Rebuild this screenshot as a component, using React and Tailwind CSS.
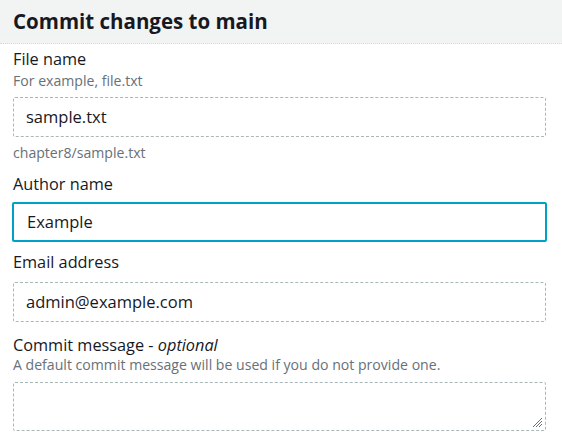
import React from 'react';

const font = { fontFamily: '"Open Sans", "Noto Sans", Arial, sans-serif' };

function Label({ children }) {
  return <div className="text-[16.3px] leading-[22px] text-[#16191f]">{children}</div>;
}

function Hint({ children }) {
  return <div className="text-[14.1px] leading-[18px] text-[#687078]">{children}</div>;
}

function Field({ value, focused }) {
  return (
    <div
      className={`h-[40px] flex items-center pl-[12px] bg-white rounded-[2px] text-[16.5px] text-[#16191f] ${
        focused ? 'border-2 border-[#00a1c9] -mx-px pl-[13px]' : 'border border-dashed border-[#aab7b8]'
      }`}
    >
      {value}
    </div>
  );
}

export default function App() {
  return (
    <div className="w-[562px] h-[441px] bg-white overflow-hidden" style={font}>
      <div className="h-[44px] bg-[#f2f3f3] border-b border-dotted border-[#d5dbdb] flex items-center px-[13px]">
        <h1 className="text-[20.5px] font-bold text-[#16191f]">Commit changes to main</h1>
      </div>
      <div className="pl-[13px] pr-[16px]">
        <div className="mt-[4px]">
          <Label>File name</Label>
          <div className="mt-[2px]"><Hint>For example, file.txt</Hint></div>
          <div className="mt-[7px]"><Field value="sample.txt" /></div>
          <div className="mt-[7px]"><Hint>chapter8/sample.txt</Hint></div>
        </div>
        <div className="mt-[11px]">
          <Label>Author name</Label>
          <div className="mt-[7px]"><Field value="Example" focused /></div>
        </div>
        <div className="mt-[9px]">
          <Label>Email address</Label>
          <div className="mt-[9px]"><Field value="admin@example.com" /></div>
        </div>
        <div className="mt-[12px]">
          <Label>
            Commit message - <i>optional</i>
          </Label>
          <Hint>A default commit message will be used if you do not provide one.</Hint>
          <div className="mt-[8px] relative h-[49px] border border-dashed border-[#aab7b8] rounded-[2px] bg-white">
            <svg className="absolute right-[2px] bottom-[2px]" width="12" height="12" viewBox="0 0 12 12">
              <path d="M11 2 L2 11 M11 5 L5 11 M11 8 L8 11" stroke="#687078" strokeWidth="1" />
            </svg>
          </div>
        </div>
      </div>
    </div>
  );
}
